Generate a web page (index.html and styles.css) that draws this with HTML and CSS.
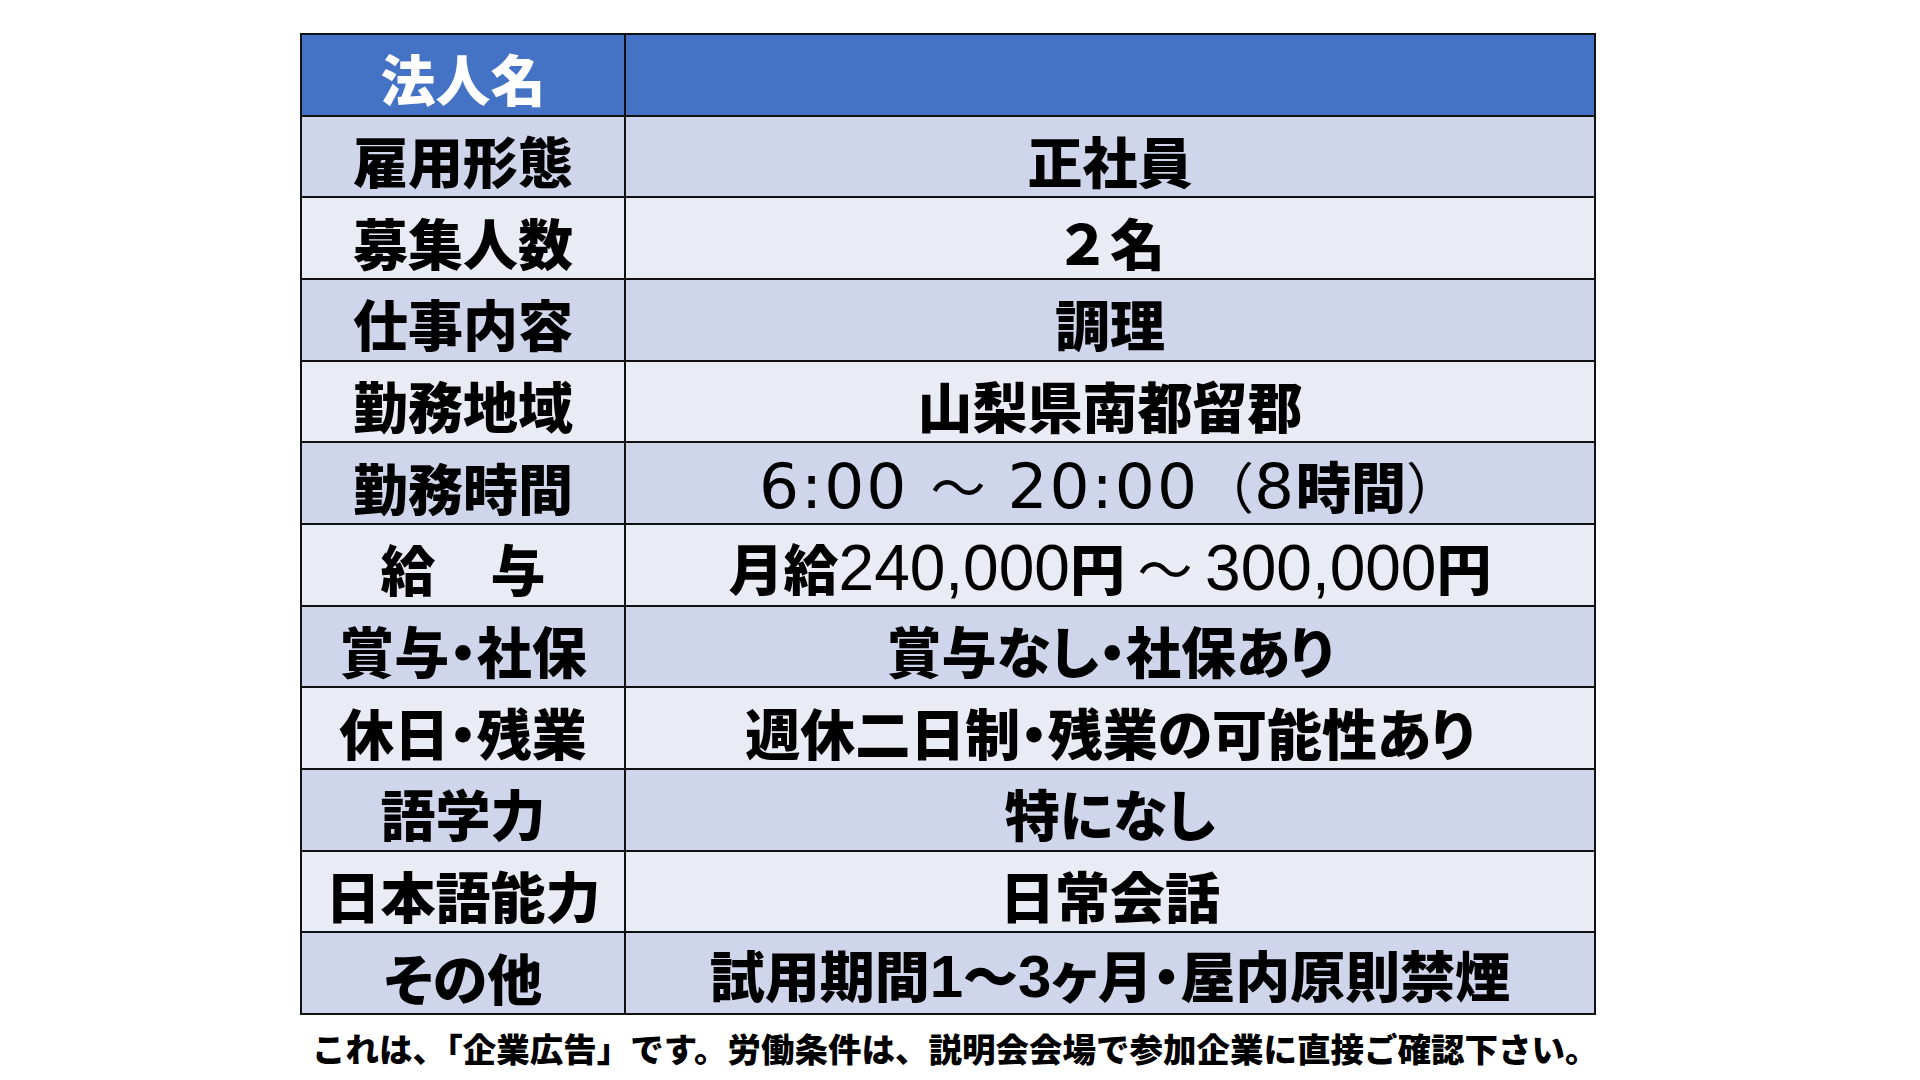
FILE: index.html
```html
<!DOCTYPE html>
<html lang="ja">
<head>
<meta charset="utf-8">
<title>求人票</title>
<link rel="stylesheet" href="styles.css">
</head>
<body>
<div class="sheet">
  <table class="job">
    <tr class="head"><td class="key">法人名</td><td class="val"></td></tr>
    <tr class="odd"><td class="key">雇用形態</td><td class="val">正社員</td></tr>
    <tr class="even"><td class="key">募集人数</td><td class="val"><span class="full">２</span>名</td></tr>
    <tr class="odd"><td class="key">仕事内容</td><td class="val">調理</td></tr>
    <tr class="even"><td class="key">勤務地域</td><td class="val">山梨県南都留郡</td></tr>
    <tr class="odd"><td class="key">勤務時間</td><td class="val"><span class="wide">6:00 </span><span class="thin">～</span><span class="wide"> 20:00</span><span class="thin">（</span><span class="wide">8</span>時間<span class="thin">）</span></td></tr>
    <tr class="even"><td class="key">給　与</td><td class="val">月給<span class="lat">240,000</span>円 <span class="thin">～</span> <span class="lat">300,000</span>円</td></tr>
    <tr class="odd"><td class="key">賞与・社保</td><td class="val">賞与なし・社保あり</td></tr>
    <tr class="even"><td class="key">休日・残業</td><td class="val">週休二日制・残業の可能性あり</td></tr>
    <tr class="odd"><td class="key">語学力</td><td class="val">特になし</td></tr>
    <tr class="even"><td class="key">日本語能力</td><td class="val">日常会話</td></tr>
    <tr class="odd"><td class="key">その他</td><td class="val">試用期間<span class="latb">1</span>～<span class="latb">3</span>ヶ月・屋内原則禁煙</td></tr>
  </table>
  <p class="note">これは、「企業広告」です。労働条件は、説明会会場で参加企業に直接ご確認下さい。</p>
</div>
</body>
</html>
```

FILE: styles.css
```css
html, body {
  margin: 0;
  padding: 0;
  background: #ffffff;
}
body {
  font-family: "Noto Sans CJK JP", "Noto Sans", sans-serif;
  color: #000;
}
.sheet {
  width: 1296px;
  margin-left: 300px;
  padding-top: 33px;
}
.job {
  width: 1296px;
  border-collapse: collapse;
  table-layout: fixed;
  border: 2px solid #000;
}
.job td {
  height: 81.66px;
  padding: 6px 0 0 0;
  box-sizing: border-box;
  border: 2px solid #111;
  text-align: center;
  vertical-align: middle;
  font-size: 55px;
  font-weight: 900;
  line-height: 1;
  white-space: nowrap;
  font-feature-settings: "palt";
}
.job td.key {
  width: 324px;
}
.head td {
  background: #4472c4;
  color: #fff;
}
.odd td {
  background: #cfd5ea;
}
.even td {
  background: #e9ebf5;
}
.full {
  font-feature-settings: normal;
}
.lat {
  font-family: "Liberation Sans", Arial, sans-serif;
  font-weight: 400;
  font-size: 64px;
}
.latb {
  font-family: "Liberation Sans", Arial, sans-serif;
  font-weight: 700;
  font-size: 60px;
}
.wide {
  font-family: "DejaVu Sans", sans-serif;
  font-weight: 400;
  font-size: 63px;
  letter-spacing: 2px;
}
.thin {
  font-weight: 400;
  font-feature-settings: normal;
}
.note {
  margin: 13px 0 0 0;
  padding-left: 12px;
  text-align: center;
  font-size: 33.5px;
  font-weight: 900;
  line-height: 1.2;
  white-space: nowrap;
}
```
